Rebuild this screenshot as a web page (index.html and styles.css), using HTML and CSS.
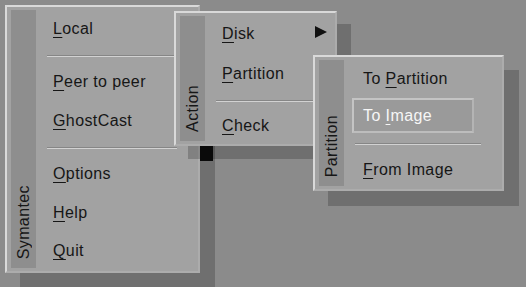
FILE: index.html
```html
<!DOCTYPE html>
<html lang="en">
<head>
    <meta charset="UTF-8">
    <meta name="viewport" content="width=device-width, initial-scale=1.0">
    <title>Ghost Menu</title>
    <link rel="stylesheet" href="styles.css">
</head>
<body>
    <div class="desktop">
        <div class="menu menu-main">
            <div class="strip"><span>Symantec</span></div>
            <div class="items">
                <div class="item"><span><u>L</u>ocal</span></div>
                <div class="sep"></div>
                <div class="item"><span><u>P</u>eer to peer</span></div>
                <div class="item"><span><u>G</u>hostCast</span></div>
                <div class="sep"></div>
                <div class="item"><span><u>O</u>ptions</span></div>
                <div class="item"><span><u>H</u>elp</span></div>
                <div class="item"><span><u>Q</u>uit</span></div>
            </div>
        </div>

        <div class="menu menu-action">
            <div class="strip"><span>Action</span></div>
            <div class="items">
                <div class="item item-sub">
                    <span><u>D</u>isk</span>
                    <svg class="arrow" width="14" height="12" viewBox="0 0 14 12">
                        <path d="M1 0 L13 6 L1 12 Z" fill="#111"/>
                    </svg>
                </div>
                <div class="item"><span><u>P</u>artition</span></div>
                <div class="sep"></div>
                <div class="item"><span><u>C</u>heck</span></div>
            </div>
        </div>

        <div class="shadow-overlap"></div>

        <div class="menu menu-part">
            <div class="strip"><span>Partition</span></div>
            <div class="items">
                <div class="item"><span>To <u>P</u>artition</span></div>
                <div class="item active"><span>To <u>I</u>mage</span></div>
                <div class="sep"></div>
                <div class="item"><span><u>F</u>rom Image</span></div>
            </div>
        </div>
    </div>
</body>
</html>
```

FILE: styles.css
```css
* {
    box-sizing: border-box;
}

body {
    margin: 0;
    background: #8b8b8b;
    font-family: "Liberation Sans", Arial, sans-serif;
    font-size: 16px;
    letter-spacing: 0.4px;
    color: #161616;
    overflow: hidden;
}

.desktop {
    position: relative;
    width: 526px;
    height: 287px;
}

/* menus are floating windows on the screen */
.menu {
    position: absolute;
    display: flex;
    background: #a2a2a2;
    border: 2px solid;
    border-color: #d9d9d9 #acacac #acacac #d9d9d9;
    box-shadow: 15px 15px 0 rgba(0, 0, 0, 0.2);
    padding: 1px 21px 1px 2px;
}

.menu-main {
    left: 5px;
    top: 5px;
    width: 195px;
    height: 268px;
}

.menu-action {
    left: 174px;
    top: 11px;
    width: 163px;
    height: 135px;
    box-shadow: 14px 13px 0 rgba(0, 0, 0, 0.2);
}

.menu-part {
    left: 313px;
    top: 55px;
    width: 191px;
    height: 136px;
    box-shadow: 15px 15px 0 rgba(0, 0, 0, 0.2);
}

.shadow-overlap {
    position: absolute;
    left: 200px;
    top: 146px;
    width: 13px;
    height: 15px;
    background: #0a0a0a;
}

.strip {
    width: 25px;
    margin: 2px 0 2px 2px;
    background: #8e8e8e;
    display: flex;
    flex-direction: column;
    justify-content: flex-end;
    align-items: center;
    padding-bottom: 9px;
    flex-shrink: 0;
}

.strip span {
    writing-mode: vertical-rl;
    transform: rotate(180deg);
    line-height: 20px;
}

.items {
    flex: 1;
    margin-left: 11px;
    display: flex;
    flex-direction: column;
}

.item {
    height: 38px;
    flex-shrink: 0;
    display: flex;
    align-items: center;
    padding-left: 6px;
    white-space: nowrap;
}

.item u {
    text-underline-offset: 3px;
}

.sep {
    flex-shrink: 0;
    border-top: 1px solid #868686;
    border-bottom: 1px solid #d2d2d2;
    margin: 6px 0 6px;
}

.menu-main .items {
    padding-top: 2px;
}

.menu-main .sep {
    margin: 7px 0 6px;
}

.menu-main .sep + .item + .item {
    height: 39px;
}

.menu-action .item {
    height: 40px;
}

.menu-action .sep {
    margin: 6px 0 4px;
}

.item-sub {
    justify-content: space-between;
}

.arrow {
    margin-right: -14px;
    margin-top: -4px;
}

.menu-part .items {
    padding-top: 5px;
}

.menu-part .item {
    height: 32px;
    padding-left: 8px;
}

.menu-part .item.active {
    height: 35px;
    margin: 3px 7px 0 -3px;
    padding-left: 9px;
    background: #9a9a9a;
    border: 2px solid;
    border-color: #c4c4c4 #b4b4b4 #bdbdbd #c4c4c4;
    color: #f6f6f6;
}

.menu-part .sep {
    margin: 10px 0 9px;
}
```
